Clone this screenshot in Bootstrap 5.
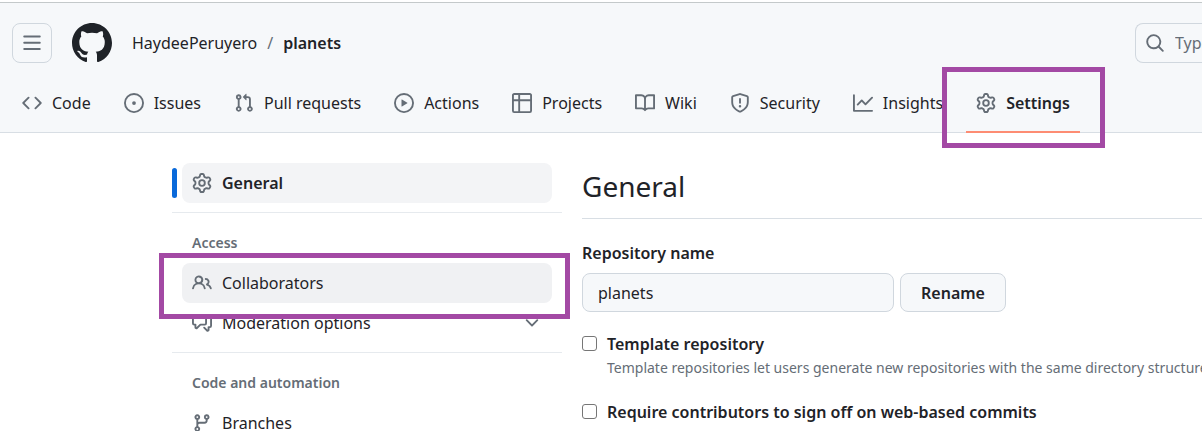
<!DOCTYPE html>
<html lang="en">
<head>
<meta charset="utf-8">
<meta name="viewport" content="width=device-width, initial-scale=1">
<title>Settings · HaydeePeruyero/planets</title>
<link href="https://cdn.jsdelivr.net/npm/bootstrap@5.3.0/dist/css/bootstrap.min.css" rel="stylesheet">
<style>
  :root { --ink: #1f2328; --muted: #656d76; --line: #d0d7de; --soft: #f6f8fa; --mark: #a349a4; }
  body { font-family: "Noto Sans", "Open Sans", sans-serif; font-size: 16px; line-height: 24px; color: var(--ink); background: #fff; }
  a { color: var(--ink); text-decoration: none; }
  .oct { width: 20px; height: 20px; fill: var(--muted); flex: none; display: block; }
  .semi { font-weight: 600; }
  .app-header { background: var(--soft); border-top: 1px solid #c4c9ca; border-bottom: 1px solid #d8dee4; margin-top: 2px; }
  .top-row { padding: 20px 0 0 12px; }
  .menu-btn { width: 40px; height: 40px; border: 1px solid var(--line); border-radius: 8px; background: var(--soft); }
  .home-link { margin: 0 20px; }
  .logo { width: 40px; height: 40px; fill: var(--ink); display: block; }
  .crumbs { gap: 10px; }
  .crumbs span { color: var(--muted); }
  .search-box { width: 67px; height: 40px; border: 1px solid var(--line); border-right: 0; border-radius: 8px 0 0 8px; padding-left: 9px; gap: 10px; }
  .search-box input { border: 0; background: transparent; padding: 0; min-width: 0; width: 100%; outline: 0; }
  .search-box input::placeholder { color: var(--muted); opacity: 1; }
  .tabs { padding: 20px 12px 0; gap: 13px; }
  .tab-link { height: 49px; padding: 0 10px 9px; gap: 10px; white-space: nowrap; }
  .tab-link.active { box-shadow: 0 1px 0 #fd8c73, inset 0 -1px 0 #fd8c73; }
  .marker { position: absolute; border: 5px solid var(--mark); pointer-events: none; z-index: 2; }
  .marker-tab { inset: -16px -25px -16px -24px; }
  .marker-item { inset: -10px -18px -16px -23px; }
  .page-body { padding-left: 172px; padding-top: 30px; gap: 20px; }
  .side { width: 390px; flex: none; }
  .side-link { height: 40px; margin: 0 10px; padding: 0 10px; gap: 10px; border-radius: 8px; }
  .side-link.active { background: #f3f4f6; }
  .side-link.hovered { background: #f0f1f3; }
  .side-link.active::before { content: ""; position: absolute; left: -10px; top: 5px; width: 5px; height: 30px; border-radius: 4px; background: #0969da; }
  .side-rule { height: 1px; background: #e6eaee; margin: 9px 0 20px; }
  .side-title { font-size: 14px; line-height: 20px; font-weight: 600; color: var(--muted); margin: 0 20px 10px; }
  .main { min-width: 0; white-space: nowrap; }
  .main h1 { font-size: 28px; line-height: 40px; font-weight: 400; margin: 3px 0 0; padding-bottom: 12px; border-bottom: 1px solid #d8dee4; }
  .repo-label { margin: 22px 0 8px; }
  .repo-row { gap: 6px; }
  .repo-input { width: 312px; height: 39px; border: 1px solid var(--line); border-radius: 8px; background: var(--soft); padding: 0 15px; color: var(--ink); }
  .rename { width: 106px; height: 39px; border: 1px solid var(--line); border-radius: 8px; background: var(--soft); color: var(--ink); }
  .tick { width: 15px; height: 15px; margin: 4px 0 0; flex: none; border: 1px solid #767676; border-radius: 3px; appearance: none; background: #fff; }
  .note { font-size: 14px; color: var(--muted); }
  .opt { gap: 10px; margin-top: 20px; }
</style>
</head>
<body class="vh-100 overflow-hidden">
<header class="app-header">
  <div class="top-row d-flex align-items-center">
    <button type="button" class="menu-btn d-flex align-items-center justify-content-center p-0" aria-label="Open menu">
      <svg class="oct" viewBox="0 0 16 16"><path d="M1 2.75A.75.75 0 0 1 1.75 2h12.5a.75.75 0 0 1 0 1.5H1.75A.75.75 0 0 1 1 2.75Zm0 5A.75.75 0 0 1 1.75 7h12.5a.75.75 0 0 1 0 1.5H1.75A.75.75 0 0 1 1 7.75ZM1.75 12h12.5a.75.75 0 0 1 0 1.5H1.75a.75.75 0 0 1 0-1.5Z"/></svg>
    </button>
    <a href="#" class="home-link d-block" aria-label="Home">
      <svg class="logo" viewBox="0 0 16 16"><path d="M8 0c4.42 0 8 3.58 8 8a8.013 8.013 0 0 1-5.45 7.59c-.4.08-.55-.17-.55-.38 0-.27.01-1.13.01-2.2 0-.75-.25-1.23-.54-1.48 1.78-.2 3.65-.88 3.65-3.95 0-.88-.31-1.59-.82-2.15.08-.2.36-1.02-.08-2.12 0 0-.67-.22-2.2.82-.64-.18-1.32-.27-2-.27-.68 0-1.36.09-2 .27-1.53-1.03-2.2-.82-2.2-.82-.44 1.1-.16 1.92-.08 2.12-.51.56-.82 1.28-.82 2.15 0 3.06 1.86 3.75 3.64 3.95-.23.2-.44.55-.51 1.07-.46.21-1.61.55-2.33-.66-.15-.24-.6-.83-1.23-.82-.67.01-.27.38.01.53.34.19.73.9.82 1.13.16.45.68 1.31 2.69.94 0 .67.01 1.3.01 1.49 0 .21-.15.45-.55.38A7.995 7.995 0 0 1 0 8c0-4.42 3.58-8 8-8Z"/></svg>
    </a>
    <nav class="crumbs d-flex" aria-label="Repository">
      <a href="#">HaydeePeruyero</a><span>/</span><a href="#" class="semi">planets</a>
    </nav>
    <label class="search-box d-flex align-items-center ms-auto">
      <svg class="oct" viewBox="0 0 16 16"><path d="M10.68 11.74a6 6 0 0 1-7.922-8.982 6 6 0 0 1 8.982 7.922l3.04 3.04a.749.749 0 0 1-.326 1.275.749.749 0 0 1-.734-.215ZM11.5 7a4.499 4.499 0 1 0-8.997 0A4.499 4.499 0 0 0 11.5 7Z"/></svg>
      <input type="text" placeholder="Type / to search" aria-label="Search">
    </label>
  </div>
  <nav class="tabs d-flex" aria-label="Sections">
    <a href="#" class="tab-link d-flex align-items-center"><svg class="oct" viewBox="0 0 16 16"><path d="m11.28 3.22 4.25 4.25a.75.75 0 0 1 0 1.06l-4.25 4.25a.749.749 0 0 1-1.275-.326.749.749 0 0 1 .215-.734L13.94 8l-3.72-3.72a.749.749 0 0 1 .326-1.275.749.749 0 0 1 .734.215Zm-6.56 0a.751.751 0 0 1 1.042.018.751.751 0 0 1 .018 1.042L2.06 8l3.72 3.72a.749.749 0 0 1-.326 1.275.749.749 0 0 1-.734-.215L.47 8.53a.75.75 0 0 1 0-1.06Z"/></svg><span>Code</span></a>
    <a href="#" class="tab-link d-flex align-items-center"><svg class="oct" viewBox="0 0 16 16"><path d="M8 9.5a1.5 1.5 0 1 0 0-3 1.5 1.5 0 0 0 0 3Z"/><path d="M8 0a8 8 0 1 1 0 16A8 8 0 0 1 8 0ZM1.5 8a6.5 6.5 0 1 0 13 0 6.5 6.5 0 0 0-13 0Z"/></svg><span>Issues</span></a>
    <a href="#" class="tab-link d-flex align-items-center"><svg class="oct" viewBox="0 0 16 16"><path d="M1.5 3.25a2.25 2.25 0 1 1 3 2.122v5.256a2.251 2.251 0 1 1-1.5 0V5.372A2.25 2.25 0 0 1 1.5 3.25Zm5.677-.177L9.573.677A.25.25 0 0 1 10 .854V2.5h1A2.5 2.5 0 0 1 13.5 5v5.628a2.251 2.251 0 1 1-1.5 0V5a1 1 0 0 0-1-1h-1v1.646a.25.25 0 0 1-.427.177L7.177 3.427a.25.25 0 0 1 0-.354ZM3.75 2.5a.75.75 0 1 0 0 1.5.75.75 0 0 0 0-1.5Zm0 9.5a.75.75 0 1 0 0 1.5.75.75 0 0 0 0-1.5Zm8.25.75a.75.75 0 1 0 1.5 0 .75.75 0 0 0-1.5 0Z"/></svg><span>Pull requests</span></a>
    <a href="#" class="tab-link d-flex align-items-center"><svg class="oct" viewBox="0 0 16 16"><path d="M8 0a8 8 0 1 1 0 16A8 8 0 0 1 8 0ZM1.5 8a6.5 6.5 0 1 0 13 0 6.5 6.5 0 0 0-13 0Zm4.879-2.773 4.264 2.559a.25.25 0 0 1 0 .428l-4.264 2.559A.25.25 0 0 1 6 10.559V5.442a.25.25 0 0 1 .379-.215Z"/></svg><span>Actions</span></a>
    <a href="#" class="tab-link d-flex align-items-center"><svg class="oct" viewBox="0 0 16 16"><path d="M0 1.75C0 .784.784 0 1.75 0h12.5C15.216 0 16 .784 16 1.75v12.5A1.75 1.75 0 0 1 14.25 16H1.75A1.75 1.75 0 0 1 0 14.25ZM6.5 6.5v8h7.75a.25.25 0 0 0 .25-.25V6.5Zm8-1.5V1.75a.25.25 0 0 0-.25-.25H6.5V5Zm-13 1.5v7.75c0 .138.112.25.25.25H5v-8ZM5 5V1.5H1.75a.25.25 0 0 0-.25.25V5Z"/></svg><span>Projects</span></a>
    <a href="#" class="tab-link d-flex align-items-center"><svg class="oct" viewBox="0 0 16 16"><path d="M0 1.75A.75.75 0 0 1 .75 1h4.253c1.227 0 2.317.59 3 1.501A3.743 3.743 0 0 1 11.006 1h4.245a.75.75 0 0 1 .75.75v10.5a.75.75 0 0 1-.75.75h-4.507a2.25 2.25 0 0 0-1.591.659l-.622.621a.75.75 0 0 1-1.06 0l-.622-.621A2.25 2.25 0 0 0 5.258 13H.75a.75.75 0 0 1-.75-.75Zm7.251 10.324.004-5.073-.002-2.253A2.25 2.25 0 0 0 5.003 2.5H1.5v9h3.757a3.75 3.75 0 0 1 1.994.574ZM8.755 4.75l-.004 7.322a3.752 3.752 0 0 1 1.992-.572H14.5v-9h-3.495a2.25 2.25 0 0 0-2.25 2.25Z"/></svg><span>Wiki</span></a>
    <a href="#" class="tab-link d-flex align-items-center"><svg class="oct" viewBox="0 0 16 16"><path d="M7.467.133a1.748 1.748 0 0 1 1.066 0l5.25 1.68A1.75 1.75 0 0 1 15 3.48V7c0 1.566-.32 3.182-1.303 4.682-.983 1.498-2.585 2.813-5.032 3.855a1.697 1.697 0 0 1-1.33 0c-2.447-1.042-4.049-2.357-5.032-3.855C1.32 10.182 1 8.566 1 7V3.48a1.75 1.75 0 0 1 1.217-1.667Zm.61 1.429a.25.25 0 0 0-.153 0l-5.25 1.68a.25.25 0 0 0-.174.238V7c0 1.358.275 2.666 1.057 3.86.784 1.194 2.121 2.34 4.366 3.297a.196.196 0 0 0 .154 0c2.245-.956 3.582-2.104 4.366-3.298C13.225 9.666 13.5 8.36 13.5 7V3.48a.251.251 0 0 0-.174-.237l-5.25-1.68ZM8.75 4.75v3a.75.75 0 0 1-1.5 0v-3a.75.75 0 0 1 1.5 0ZM9 10.5a1 1 0 1 1-2 0 1 1 0 0 1 2 0Z"/></svg><span>Security</span></a>
    <a href="#" class="tab-link d-flex align-items-center"><svg class="oct" viewBox="0 0 16 16"><path d="M1.5 1.75V13.5h13.75a.75.75 0 0 1 0 1.5H.75a.75.75 0 0 1-.75-.75V1.75a.75.75 0 0 1 1.5 0Zm14.28 2.53-5.25 5.25a.75.75 0 0 1-1.06 0L7 7.06 4.28 9.78a.751.751 0 0 1-1.042-.018.751.751 0 0 1-.018-1.042l3.25-3.25a.75.75 0 0 1 1.06 0L10 7.94l4.72-4.72a.751.751 0 0 1 1.042.018.751.751 0 0 1 .018 1.042Z"/></svg><span>Insights</span></a>
    <a href="#" class="tab-link active semi position-relative d-flex align-items-center" aria-current="page"><svg class="oct" viewBox="0 0 16 16"><path id="gear" d="M8 0a8.2 8.2 0 0 1 .701.031C9.444.095 9.99.645 10.16 1.29l.288 1.107c.018.066.079.158.212.224.231.114.454.243.668.386.123.082.233.09.299.071l1.103-.303c.644-.176 1.392.021 1.82.63.27.385.506.792.704 1.218.315.675.111 1.422-.364 1.891l-.814.806c-.049.048-.098.147-.088.294.016.257.016.515 0 .772-.01.147.038.246.088.294l.814.806c.475.469.679 1.216.364 1.891a7.977 7.977 0 0 1-.704 1.217c-.428.61-1.176.807-1.82.63l-1.102-.302c-.067-.019-.177-.011-.3.071a5.909 5.909 0 0 1-.668.386c-.133.066-.194.158-.211.224l-.29 1.106c-.168.646-.715 1.196-1.458 1.26a8.006 8.006 0 0 1-1.402 0c-.743-.064-1.289-.614-1.458-1.26l-.289-1.106c-.018-.066-.079-.158-.212-.224a5.738 5.738 0 0 1-.668-.386c-.123-.082-.233-.09-.299-.071l-1.103.303c-.644.176-1.392-.021-1.82-.63a8.12 8.12 0 0 1-.704-1.218c-.315-.675-.111-1.422.363-1.891l.815-.806c.05-.048.098-.147.088-.294a6.214 6.214 0 0 1 0-.772c.01-.147-.038-.246-.088-.294l-.815-.806C.635 6.045.431 5.298.746 4.623a7.92 7.92 0 0 1 .704-1.217c.428-.61 1.176-.807 1.82-.63l1.102.302c.067.019.177.011.3-.071.214-.143.437-.272.668-.386.133-.066.194-.158.211-.224l.29-1.106C6.009.645 6.556.095 7.299.03 7.53.01 7.764 0 8 0Zm-.571 1.525c-.036.003-.108.036-.137.146l-.289 1.105c-.147.561-.549.967-.998 1.189-.173.086-.34.183-.5.29-.417.278-.97.423-1.529.27l-1.103-.303c-.109-.03-.175.016-.195.045-.22.312-.412.644-.573.99-.014.031-.021.11.059.19l.815.806c.411.406.562.957.53 1.456a4.709 4.709 0 0 0 0 .582c.032.499-.119 1.05-.53 1.456l-.815.806c-.081.08-.073.159-.059.19.162.346.353.677.573.989.02.03.085.076.195.046l1.102-.303c.56-.153 1.113-.008 1.53.27.161.107.328.204.501.29.447.222.85.629.997 1.189l.289 1.105c.029.109.101.143.137.146a6.6 6.6 0 0 0 1.142 0c.036-.003.108-.036.137-.146l.289-1.105c.147-.561.549-.967.998-1.189.173-.086.34-.183.5-.29.417-.278.97-.423 1.529-.27l1.103.303c.109.029.175-.016.195-.045.22-.313.411-.644.573-.99.014-.031.021-.11-.059-.19l-.815-.806c-.411-.406-.562-.957-.53-1.456a4.709 4.709 0 0 0 0-.582c-.032-.499.119-1.05.53-1.456l.815-.806c.081-.08.073-.159.059-.19a6.464 6.464 0 0 0-.573-.989c-.02-.03-.085-.076-.195-.046l-1.102.303c-.56.153-1.113.008-1.53-.27a4.44 4.44 0 0 0-.501-.29c-.447-.222-.85-.629-.997-1.189l-.289-1.105c-.029-.11-.101-.143-.137-.146a6.6 6.6 0 0 0-1.142 0ZM11 8a3 3 0 1 1-6 0 3 3 0 0 1 6 0ZM9.5 8a1.5 1.5 0 1 0-3.001.001A1.5 1.5 0 0 0 9.5 8Z"/></svg><span>Settings</span><span class="marker marker-tab"></span></a>
  </nav>
</header>
<div class="page-body d-flex">
  <nav class="side" aria-label="Settings">
    <a href="#" class="side-link active position-relative d-flex align-items-center semi" aria-current="page"><svg class="oct" viewBox="0 0 16 16"><use href="#gear"/></svg><span>General</span></a>
    <div class="side-rule"></div>
    <h2 class="side-title">Access</h2>
    <a href="#" class="side-link hovered position-relative d-flex align-items-center"><svg class="oct" viewBox="0 0 16 16"><path d="M2 5.5a3.5 3.5 0 1 1 5.898 2.549 5.508 5.508 0 0 1 3.034 4.084.75.75 0 1 1-1.482.235 4 4 0 0 0-7.9 0 .75.75 0 0 1-1.482-.236A5.507 5.507 0 0 1 3.102 8.05 3.493 3.493 0 0 1 2 5.5ZM11 4a3.001 3.001 0 0 1 2.22 5.018 5.01 5.01 0 0 1 2.56 3.012.749.749 0 0 1-.885.954.752.752 0 0 1-.549-.514 3.507 3.507 0 0 0-2.522-2.372.75.75 0 0 1-.574-.73v-.352a.75.75 0 0 1 .416-.672A1.5 1.5 0 0 0 11 5.5.75.75 0 0 1 11 4Zm-5.5-.5a2 2 0 1 0-.001 3.999A2 2 0 0 0 5.5 3.5Z"/></svg><span>Collaborators</span><span class="marker marker-item"></span></a>
    <a href="#" class="side-link d-flex align-items-center"><svg class="oct" viewBox="0 0 16 16"><path d="M1.75 1h8.5c.966 0 1.75.784 1.75 1.75v5.5A1.75 1.75 0 0 1 10.25 10H7.061l-2.574 2.573A1.458 1.458 0 0 1 2 11.543V10h-.25A1.75 1.75 0 0 1 0 8.25v-5.5C0 1.784.784 1 1.75 1ZM1.5 2.75v5.5c0 .138.112.25.25.25h1a.75.75 0 0 1 .75.75v2.19l2.72-2.72a.749.749 0 0 1 .53-.22h3.5a.25.25 0 0 0 .25-.25v-5.5a.25.25 0 0 0-.25-.25h-8.5a.25.25 0 0 0-.25.25Zm13 2a.25.25 0 0 0-.25-.25h-.5a.75.75 0 0 1 0-1.5h.5c.966 0 1.75.784 1.75 1.75v5.5A1.75 1.75 0 0 1 14.25 12H14v1.543a1.458 1.458 0 0 1-2.487 1.03L9.22 12.28a.749.749 0 0 1 .326-1.275.749.749 0 0 1 .734.215l2.22 2.22v-2.19a.75.75 0 0 1 .75-.75h1a.25.25 0 0 0 .25-.25Z"/></svg><span>Moderation options</span><svg class="oct ms-auto" viewBox="0 0 16 16"><path d="M12.78 5.22a.749.749 0 0 1 0 1.06l-4.25 4.25a.749.749 0 0 1-1.06 0L3.22 6.28a.749.749 0 1 1 1.06-1.06L8 8.939l3.72-3.719a.749.749 0 0 1 1.06 0Z"/></svg></a>
    <div class="side-rule"></div>
    <h2 class="side-title">Code and automation</h2>
    <a href="#" class="side-link d-flex align-items-center"><svg class="oct" viewBox="0 0 16 16"><path d="M9.5 3.25a2.25 2.25 0 1 1 3 2.122V6A2.5 2.5 0 0 1 10 8.5H6a1 1 0 0 0-1 1v1.128a2.251 2.251 0 1 1-1.5 0V5.372a2.25 2.25 0 1 1 1.5 0v1.836A2.493 2.493 0 0 1 6 7h4a1 1 0 0 0 1-1v-.628A2.25 2.25 0 0 1 9.5 3.25Zm-6 0a.75.75 0 1 0 1.5 0 .75.75 0 0 0-1.5 0Zm8.25-.75a.75.75 0 1 0 0 1.5.75.75 0 0 0 0-1.5ZM4.25 12a.75.75 0 1 0 0 1.5.75.75 0 0 0 0-1.5Z"/></svg><span>Branches</span></a>
  </nav>
  <main class="main flex-grow-1">
    <h1>General</h1>
    <form>
      <label for="repo" class="repo-label semi d-block">Repository name</label>
      <div class="repo-row d-flex">
        <input id="repo" type="text" class="repo-input" value="planets">
        <button type="button" class="rename semi">Rename</button>
      </div>
      <div class="opt d-flex">
        <input class="tick" type="checkbox" id="tpl" aria-describedby="tpl-note">
        <div><label for="tpl" class="semi d-block">Template repository</label><div class="note" id="tpl-note">Template repositories let users generate new repositories with the same directory structure</div></div>
      </div>
      <div class="opt d-flex">
        <input class="tick" type="checkbox" id="dco">
        <label for="dco" class="semi">Require contributors to sign off on web-based commits</label>
      </div>
    </form>
  </main>
</div>
<script src="https://cdn.jsdelivr.net/npm/bootstrap@5.3.0/dist/js/bootstrap.bundle.min.js"></script>
</body>
</html>
